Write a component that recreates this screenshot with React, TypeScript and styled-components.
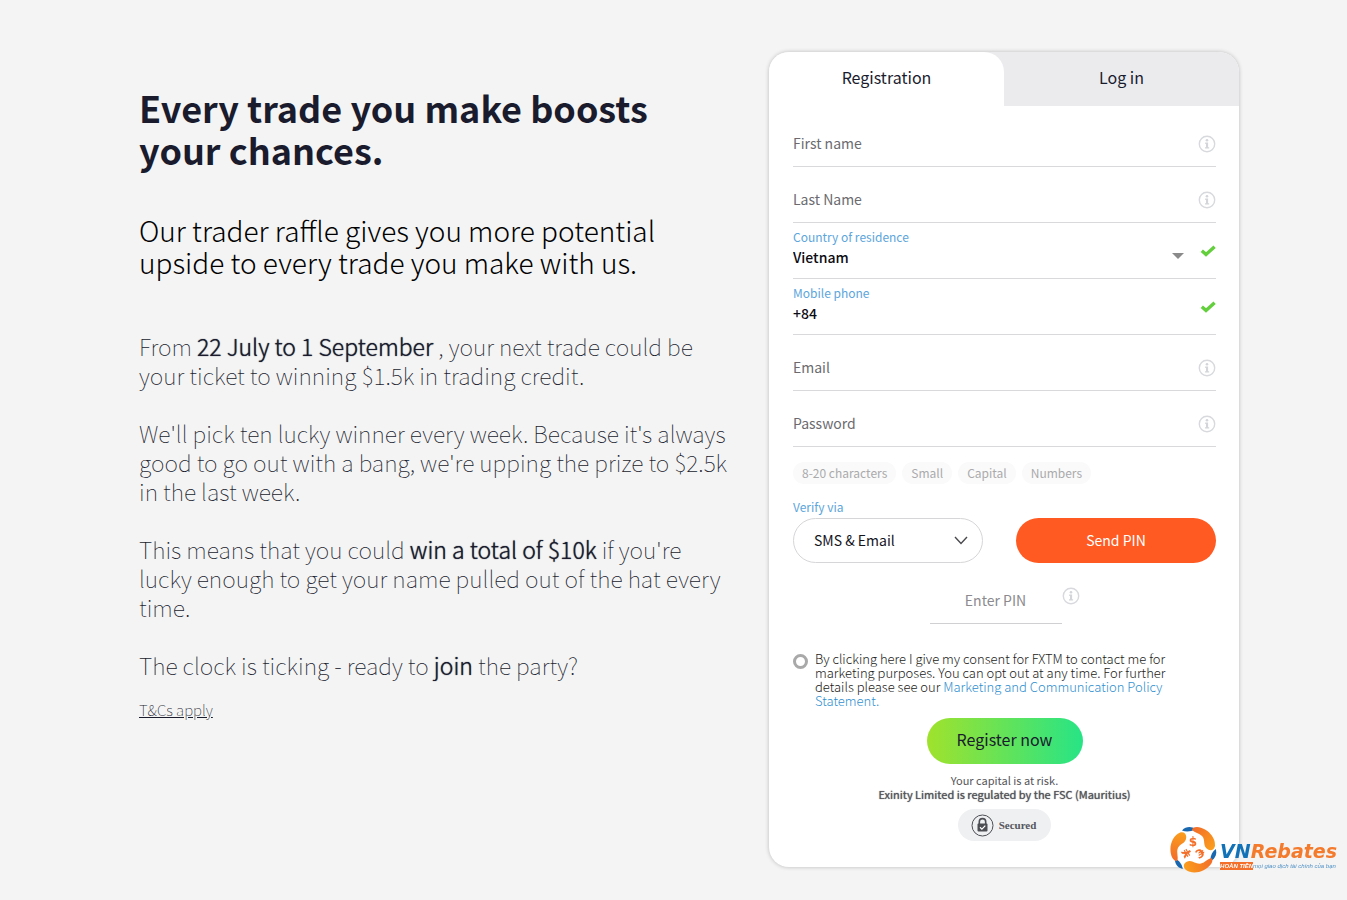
import React, { useState } from "react";
import styled, { createGlobalStyle } from "styled-components";

const GlobalStyle = createGlobalStyle`
  *, *::before, *::after { box-sizing: border-box; }
  body {
    margin: 0;
    background: #f4f4f4;
    color: #1a1c2e;
    font-family: "Noto Sans CJK SC", "Noto Sans", sans-serif;
  }
  button, input, select { font: inherit; color: inherit; }
`;

const Page = styled.main`
  display: flex;
  justify-content: space-between;
  align-items: flex-start;
  gap: 32px;
  max-width: 1131px;
  min-height: 100vh;
  margin: 0 auto;
  padding: 52px 0 32px 31px;
`;

const Intro = styled.section`
  flex: 1 1 0;
  max-width: 600px;
  padding-top: 34px;
`;

const Title = styled.h1`
  max-width: 560px;
  margin: 0 0 44px;
  font-size: 36px;
  line-height: 42px;
  font-weight: 700;
`;

const Subtitle = styled.h2`
  max-width: 560px;
  margin: 0 0 54px;
  font-size: 28px;
  line-height: 32px;
  font-weight: 300;
  color: #000;
`;

const Copy = styled.p`
  margin: 0 0 29px;
  font-size: 23px;
  line-height: 29px;
  font-weight: 100;
  color: #1a1c2e;

  strong {
    font-weight: 300;
    text-shadow: 0 0 1px currentColor;
  }

  &:last-of-type { margin-bottom: 17px; }
`;

const Terms = styled.a`
  display: inline-block;
  font-size: 15px;
  line-height: 20px;
  font-weight: 100;
  color: #1a1c2e;
`;

const Card = styled.section`
  flex: 0 0 470px;
  border-radius: 20px;
  background: #fff;
  box-shadow: 0 0 4px rgba(0, 0, 0, 0.24);
  overflow: hidden;
`;

const Tabs = styled.div`
  display: flex;
  background: #ebebee;
`;

const Tab = styled.button<{ $active?: boolean }>`
  flex: 1;
  height: 54px;
  padding: 0 0 4px;
  border: 0;
  border-radius: ${(p) => (p.$active ? "0 20px 0 0" : "0")};
  background: ${(p) => (p.$active ? "#fff" : "transparent")};
  font-size: 16px;
  line-height: 24px;
  cursor: pointer;
`;

const Form = styled.form`
  display: flex;
  flex-direction: column;
  padding: 5px 23px 26px 24px;
`;

const Field = styled.div<{ $filled?: boolean }>`
  display: flex;
  align-items: center;
  height: 56px;
  padding-top: ${(p) => (p.$filled ? 0 : 10)}px;
  border-bottom: 1px solid #d9d9dc;
`;

const FieldBody = styled.div<{ $filled?: boolean }>`
  flex: 1;
  display: flex;
  flex-direction: column;
  gap: 1px;
  align-self: ${(p) => (p.$filled ? "flex-start" : "center")};
  padding-top: ${(p) => (p.$filled ? 6 : 0)}px;
`;

const Caption = styled.label`
  font-size: 12px;
  line-height: 16px;
  color: #5ca6dc;
`;

const TextInput = styled.input<{ $filled?: boolean }>`
  width: 100%;
  height: 24px;
  padding: 0 0 2px;
  border: 0;
  outline: 0;
  background: transparent;
  font-size: 14px;
  line-height: 22px;
  font-weight: ${(p) => (p.$filled ? 500 : 400)};
  color: #0c0c14;

  &::placeholder { color: #6b6b6f; opacity: 1; }
`;

const CountrySelect = styled.select`
  appearance: none;
  width: 100%;
  height: 24px;
  padding: 0 0 2px;
  border: 0;
  outline: 0;
  background: transparent;
  font-size: 14px;
  line-height: 22px;
  font-weight: 500;
  color: #0c0c14;
`;

const FieldIcons = styled.span`
  display: flex;
  align-items: center;
  gap: 16px;
`;

const Chips = styled.ul`
  display: flex;
  gap: 6px;
  margin: 15px 0 0;
  padding: 0;
  list-style: none;
`;

const Chip = styled.li`
  padding: 0 9px;
  border-radius: 11px;
  background: #fafafa;
  font-size: 12px;
  line-height: 22px;
  color: #aaaaac;
`;

const VerifyRow = styled.div`
  display: flex;
  justify-content: space-between;
  align-items: flex-end;
  margin-top: 15px;
`;

const VerifyField = styled.div`
  display: flex;
  flex-direction: column;
  width: 190px;
`;

const SelectPill = styled.div`
  display: flex;
  align-items: center;
  height: 45px;
  margin-top: 3px;
  padding: 0 14px 0 20px;
  border: 1px solid #d6d6d9;
  border-radius: 23px;
`;

const PillSelect = styled.select`
  appearance: none;
  flex: 1;
  padding: 0 0 2px;
  border: 0;
  outline: 0;
  background: transparent;
  font-size: 14px;
  line-height: 24px;
  color: #14141c;
`;

const SendButton = styled.button`
  width: 200px;
  height: 45px;
  padding: 0 0 2px;
  border: 0;
  border-radius: 23px;
  background: #ff5a21;
  color: #fff;
  font-size: 14px;
  cursor: pointer;
`;

const PinRow = styled.div`
  display: flex;
  align-self: center;
  align-items: flex-start;
  margin-top: 24px;
`;

const PinInput = styled.input`
  width: 132px;
  height: 37px;
  padding: 0 0 10px;
  border: 0;
  border-bottom: 1px solid #d0d0d3;
  outline: 0;
  background: transparent;
  font-size: 14px;
  text-align: center;

  &::placeholder { color: #8b8b8f; opacity: 1; }
`;

const Consent = styled.div`
  display: flex;
  align-items: flex-start;
  gap: 7px;
  margin-top: 28px;
`;

const ConsentRadio = styled.input`
  appearance: none;
  flex: none;
  width: 15px;
  height: 15px;
  margin: 2px 0 0;
  border: 3px solid #a9a9a9;
  border-radius: 50%;
  background: #fff;

  &:checked { background: #5ca6dc; }
`;

const ConsentText = styled.label`
  max-width: 370px;
  font-size: 13px;
  line-height: 14px;
  font-weight: 300;
  color: #1c1c20;
`;

const PolicyLink = styled.a`
  color: #2f8fd0;
  text-decoration: none;
`;

const RegisterButton = styled.button`
  align-self: center;
  width: 156px;
  height: 46px;
  margin-top: 10px;
  padding: 0 0 4px;
  border: 0;
  border-radius: 23px;
  background: linear-gradient(90deg, #a0e22c, #27e486);
  font-size: 16px;
  cursor: pointer;
`;

const Legal = styled.p`
  margin: 9px 0 0;
  font-size: 11px;
  line-height: 14px;
  text-align: center;
  color: #55555a;

  strong {
    display: block;
    font-weight: 400;
    text-shadow: 0 0 1px currentColor;
  }
`;

const Secured = styled.div`
  display: flex;
  align-self: center;
  align-items: center;
  gap: 5px;
  height: 32px;
  margin-top: 8px;
  padding: 0 15px 0 13px;
  border-radius: 16px;
  background: #eff0f2;
  font: bold 11px "Liberation Serif", serif;
  color: #55565c;
`;

const Watermark = styled.a`
  position: fixed;
  right: 10px;
  bottom: 27px;
  display: flex;
  align-items: flex-end;
  gap: 3px;
  text-decoration: none;
`;

const BrandText = styled.span`
  display: flex;
  flex-direction: column;
  padding-bottom: 3px;
`;

const BrandName = styled.span`
  font: italic bold 19px/22px "DejaVu Sans", sans-serif;
  color: #f47a2c;

  b { color: #1272b8; }
`;

const BrandLine = styled.span`
  display: flex;
  align-items: center;
  font: italic 6px/8px "Liberation Sans", sans-serif;
  color: #4d8fc4;
  white-space: nowrap;

  b {
    background: #f4702a;
    color: #fff;
  }
`;

const InfoIcon = () => (
  <svg width="18" height="18" viewBox="0 0 18 18" fill="none" aria-hidden="true">
    <circle cx="9" cy="9" r="7.7" stroke="#d8d9dd" strokeWidth="1.4" />
    <circle cx="9" cy="5.2" r="1.3" fill="#d4d5d9" />
    <path d="M7.2 7.6h2.9v4.6h1v1.3H7v-1.3h1V8.900h-.8z" fill="#d4d5d9" />
  </svg>
);

const CheckIcon = () => (
  <svg width="16" height="12" viewBox="0 0 16 12" fill="none" aria-hidden="true">
    <path d="M1.800 5.800L6 9.400L14.600 1.800" stroke="#63cf3c" strokeWidth="3.400" />
  </svg>
);

const CaretIcon = () => (
  <svg width="12" height="16" viewBox="0 0 12 16" aria-hidden="true">
    <path d="M0 10h12L6 16z" fill="#8a8a8a" />
  </svg>
);

const ChevronIcon = () => (
  <svg width="14" height="9" viewBox="0 0 14 9" fill="none" aria-hidden="true">
    <path d="M1 1l6 6.5L13 1" stroke="#4a4a4e" strokeWidth="1.4" />
  </svg>
);

const LockIcon = () => (
  <svg width="23" height="23" viewBox="0 0 23 23" fill="none" aria-hidden="true">
    <circle cx="11.500" cy="11.500" r="10.500" stroke="#4d4e54" />
    <path d="M8.300 10V7.800a3.200 3.200 0 0 1 6.400 0V10" stroke="#4d4e54" strokeWidth="1.600" />
    <rect x="6.500" y="9.500" width="10" height="8" rx="1" fill="#4d4e54" />
    <path d="M9 13.300l1.900 1.800 3.400-3.400" stroke="#fff" strokeWidth="1.200" />
  </svg>
);

const BrandMark = () => (
  <svg width="47" height="47" viewBox="0 0 47 47" aria-hidden="true">
    <defs>
      <linearGradient id="swirl" x1="0" y1="0" x2="1" y2="1">
        <stop offset="0" stopColor="#f26a2a" />
        <stop offset="1" stopColor="#fba21c" />
      </linearGradient>
    </defs>
    <circle cx="23.500" cy="23.500" r="21" fill="#fff" />
    {[0, 120, 240].map((angle) => (
      <g key={angle} transform={`rotate(${angle} 23.500 23.500)`}>
        <path d="M12 4.500C16 0 22 .5 25 3C21 6 16 6 12 4.500z" fill="#1967ae" />
        <path
          d="M22 4C22 2 24 1 27 1C38 2 46 12 45 20C44 24 41 25 38 23.500C32 20 36 14 32 10C29 7 25 7 22 4z"
          fill="url(#swirl)"
        />
      </g>
    ))}
    <g fill="#f4702a" fontFamily="DejaVu Sans" fontWeight="700" fontSize="12" textAnchor="middle">
      <text x="23" y="20">$</text>
      <text transform="translate(17 27) rotate(240)" y="4">¥</text>
      <text transform="translate(30 27) rotate(150)" y="4">€</text>
    </g>
  </svg>
);

const InfoField = ({ id, label, type = "text" }: { id: string; label: string; type?: string }) => (
  <Field>
    <FieldBody>
      <TextInput id={id} type={type} placeholder={label} aria-label={label} />
    </FieldBody>
    <InfoIcon />
  </Field>
);

export default function App() {
  const [consent, setConsent] = useState(false);
  return (
    <>
      <GlobalStyle />
      <Page>
        <Intro>
          <Title>Every trade you make boosts your chances.</Title>
          <Subtitle>Our trader raffle gives you more potential upside to every trade you make with us.</Subtitle>
          <Copy>
            From <strong>22 July to 1 September</strong> , your next trade could be your ticket to winning $1.5k in
            trading credit.
          </Copy>
          <Copy>
            We'll pick ten lucky winner every week. Because it's always good to go out with a bang, we're upping the
            prize to $2.5k in the last week.
          </Copy>
          <Copy>
            This means that you could <strong>win a total of $10k</strong> if you're lucky enough to get your name
            pulled out of the hat every time.
          </Copy>
          <Copy>
            The clock is ticking - ready to <strong>join</strong> the party?
          </Copy>
          <Terms href="#terms">T&amp;Cs apply</Terms>
        </Intro>

        <Card>
          <Tabs role="tablist">
            <Tab type="button" role="tab" aria-selected="true" $active>Registration</Tab>
            <Tab type="button" role="tab" aria-selected="false">Log in</Tab>
          </Tabs>
          <Form onSubmit={(e) => e.preventDefault()}>
            <InfoField id="first-name" label="First name" />
            <InfoField id="last-name" label="Last Name" />
            <Field $filled>
              <FieldBody $filled>
                <Caption htmlFor="country">Country of residence</Caption>
                <CountrySelect id="country" defaultValue="Vietnam">
                  <option>Vietnam</option>
                </CountrySelect>
              </FieldBody>
              <FieldIcons>
                <CaretIcon />
                <CheckIcon />
              </FieldIcons>
            </Field>
            <Field $filled>
              <FieldBody $filled>
                <Caption htmlFor="phone">Mobile phone</Caption>
                <TextInput id="phone" type="tel" defaultValue="+84" $filled />
              </FieldBody>
              <CheckIcon />
            </Field>
            <InfoField id="email" label="Email" type="email" />
            <InfoField id="password" label="Password" type="password" />

            <Chips>
              <Chip>8-20 characters</Chip>
              <Chip>Small</Chip>
              <Chip>Capital</Chip>
              <Chip>Numbers</Chip>
            </Chips>

            <VerifyRow>
              <VerifyField>
                <Caption htmlFor="verify">Verify via</Caption>
                <SelectPill>
                  <PillSelect id="verify" defaultValue="SMS & Email">
                    <option>SMS &amp; Email</option>
                  </PillSelect>
                  <ChevronIcon />
                </SelectPill>
              </VerifyField>
              <SendButton type="button">Send PIN</SendButton>
            </VerifyRow>

            <PinRow>
              <PinInput id="pin" placeholder="Enter PIN" aria-label="Enter PIN" />
              <InfoIcon />
            </PinRow>

            <Consent>
              <ConsentRadio id="consent" type="radio" checked={consent} onChange={() => setConsent(true)} />
              <ConsentText htmlFor="consent">
                By clicking here I give my consent for FXTM to contact me for marketing purposes. You can opt out at
                any time. For further details please see our{" "}
                <PolicyLink href="#policy">Marketing and Communication Policy Statement.</PolicyLink>
              </ConsentText>
            </Consent>

            <RegisterButton type="submit">Register now</RegisterButton>
            <Legal>
              Your capital is at risk.
              <strong>Exinity Limited is regulated by the FSC (Mauritius)</strong>
            </Legal>
            <Secured>
              <LockIcon />
              Secured
            </Secured>
          </Form>
        </Card>
      </Page>

      <Watermark href="#vnrebates">
        <BrandMark />
        <BrandText>
          <BrandName><b>VN</b>Rebates</BrandName>
          <BrandLine><b>HOÀN TIỀN</b>mọi giao dịch tài chính của bạn</BrandLine>
        </BrandText>
      </Watermark>
    </>
  );
}
